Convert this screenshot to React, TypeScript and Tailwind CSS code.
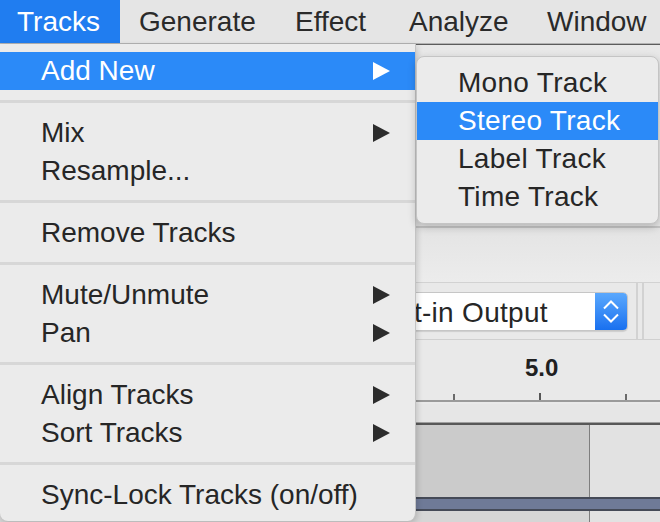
import { Fragment } from "react"

type Item = { label: string; sub?: boolean; active?: boolean }

const groups: Item[][] = [
  [{ label: "Add New", sub: true, active: true }],
  [{ label: "Mix", sub: true }, { label: "Resample..." }],
  [{ label: "Remove Tracks" }],
  [
    { label: "Mute/Unmute", sub: true },
    { label: "Pan", sub: true },
  ],
  [
    { label: "Align Tracks", sub: true },
    { label: "Sort Tracks", sub: true },
  ],
  [{ label: "Sync-Lock Tracks (on/off)" }],
]

const submenu = [
  { label: "Mono Track" },
  { label: "Stereo Track", active: true },
  { label: "Label Track" },
  { label: "Time Track" },
]

function Arrow({ white }: { white?: boolean }) {
  return (
    <svg width="18" height="18" viewBox="0 0 18 18" className="shrink-0">
      <polygon points="1,0 18,9 1,18" fill={white ? "#ffffff" : "#2c2c2c"} />
    </svg>
  )
}

function MenuBar() {
  return (
    <header className="flex h-[44px] items-stretch border-b border-[#b3b3b3] bg-[#e5e5e5] text-[28px] leading-none text-[#2a2a2a]">
      <div className="flex w-[120px] items-center bg-[#207df0] pl-[17px] text-white">Tracks</div>
      <div className="flex w-[156px] items-center pl-[19px]">Generate</div>
      <div className="flex w-[114px] items-center pl-[19px]">Effect</div>
      <div className="flex w-[138px] items-center pl-[19px]">Analyze</div>
      <div className="flex items-center pl-[19px]">Window</div>
    </header>
  )
}

function Backdrop() {
  return (
    <div className="flex flex-col border-t border-[#5c5c5c]">
      <div className="h-[181px] bg-gradient-to-b from-[#e8e8e8] to-[#e6e6e6]" />
      <div className="h-[2px] bg-[#c6c6c6]" />
      <div className="h-[55px] border-b border-[#d2d2d2] bg-gradient-to-b from-[#e4e4e4] to-[#ececec]" />

      <div className="flex h-[57px] items-center border-b border-[#d0d0d0] bg-[#e9e9e9] pl-[358px]">
        <div className="flex h-[39px] w-[270px] overflow-hidden rounded-[5px] border border-[#c6c6c6] bg-white shadow-[0_1px_1px_rgba(0,0,0,0.12)]">
          <div className="flex flex-1 items-center pt-[4px] pl-[7px] text-[28px] leading-none tracking-[0.3px] whitespace-nowrap text-[#262626]">
            Built-in Output
          </div>
          <div className="flex w-[32px] flex-col items-center justify-center gap-[3px] bg-gradient-to-b from-[#5aa8fd] to-[#1870ef]">
            <svg width="18" height="10" viewBox="0 0 18 10">
              <polyline points="2,8.5 9,1.5 16,8.5" fill="none" stroke="#fff" strokeWidth="2" />
            </svg>
            <svg width="18" height="10" viewBox="0 0 18 10">
              <polyline points="2,1.5 9,8.5 16,1.5" fill="none" stroke="#fff" strokeWidth="2" />
            </svg>
          </div>
        </div>
        <div className="ml-[8px] h-full w-[2px] bg-[#d2d2d2]" />
        <div className="ml-[4px] h-full w-[2px] bg-[#d2d2d2]" />
      </div>

      <div className="flex h-[82px] flex-col bg-[#e9e9e9]">
        <div className="pt-[16px] pl-[525px] text-[24px] leading-none font-bold text-[#202020]">5.0</div>
        <svg width="660" height="14" viewBox="0 0 660 14" className="mt-[10px]">
          <rect x="453" y="4" width="2" height="7" fill="#6a6a6a" />
          <rect x="539" y="3" width="2" height="8" fill="#555" />
          <rect x="625" y="4" width="2" height="7" fill="#6a6a6a" />
          <rect x="0" y="10" width="660" height="2" fill="#9a9a9a" />
        </svg>
        <div className="flex-1 bg-[#e6e6e6]" />
      </div>

      <div className="h-[1px] bg-[#a0a0a0]" />
      <div className="h-[2px] bg-[#585858]" />
      <div className="flex h-[72px]">
        <div className="w-[589px] bg-[#cbcbcb]" />
        <div className="w-[1px] bg-[#7e7e7e]" />
        <div className="flex-1 bg-[#e2e2e2]" />
      </div>
      <div className="h-[2px] bg-[#454a57]" />
      <div className="h-[10px] bg-[#6f7a97]" />
      <div className="h-[2px] bg-[#454a57]" />
      <div className="flex h-[20px]">
        <div className="w-[589px] bg-[#d6d6d6]" />
        <div className="w-[1px] bg-[#7e7e7e]" />
        <div className="flex-1 bg-[#e2e2e2]" />
      </div>
    </div>
  )
}

function TracksMenu() {
  return (
    <div className="absolute top-[44px] left-0 w-[416px] rounded-b-[8px] border-r border-[#c3c3c3] bg-[#ebebeb] pt-[8px] pb-[7px] text-[28px] leading-none text-[#262626] shadow-[1px_2px_6px_rgba(0,0,0,0.18)]">
      {groups.map((group, gi) => (
        <Fragment key={gi}>
          {gi > 0 && (
            <div className="pt-[10px] pb-[11px]">
              <div className="h-[3px] bg-[#d7d7d7]" />
            </div>
          )}
          {group.map((item) => (
            <div
              key={item.label}
              className={
                item.active
                  ? "flex h-[38px] items-center justify-between bg-[#2b8af8] pr-[25px] pl-[41px] text-white"
                  : "flex h-[38px] items-center justify-between pr-[25px] pl-[41px]"
              }
            >
              <span>{item.label}</span>
              {item.sub && <Arrow white={item.active} />}
            </div>
          ))}
        </Fragment>
      ))}
    </div>
  )
}

function AddNewMenu() {
  return (
    <div className="absolute top-[56px] left-[416px] w-[243px] rounded-[8px] border border-[#c4c4c4] bg-[#ebebeb] py-[7px] text-[28px] leading-none tracking-[0.3px] text-[#262626] shadow-[0_3px_8px_rgba(0,0,0,0.22)]">
      {submenu.map((item) => (
        <div
          key={item.label}
          className={
            item.active
              ? "flex h-[38px] items-center bg-[#2b8af8] pl-[41px] text-white"
              : "flex h-[38px] items-center pl-[41px]"
          }
        >
          {item.label}
        </div>
      ))}
    </div>
  )
}

export default function App() {
  return (
    <div className="relative h-[522px] w-[660px] overflow-hidden bg-[#e8e8e8] font-['Liberation_Sans','Helvetica_Neue',Arial,sans-serif]">
      <MenuBar />
      <Backdrop />
      <TracksMenu />
      <AddNewMenu />
    </div>
  )
}
